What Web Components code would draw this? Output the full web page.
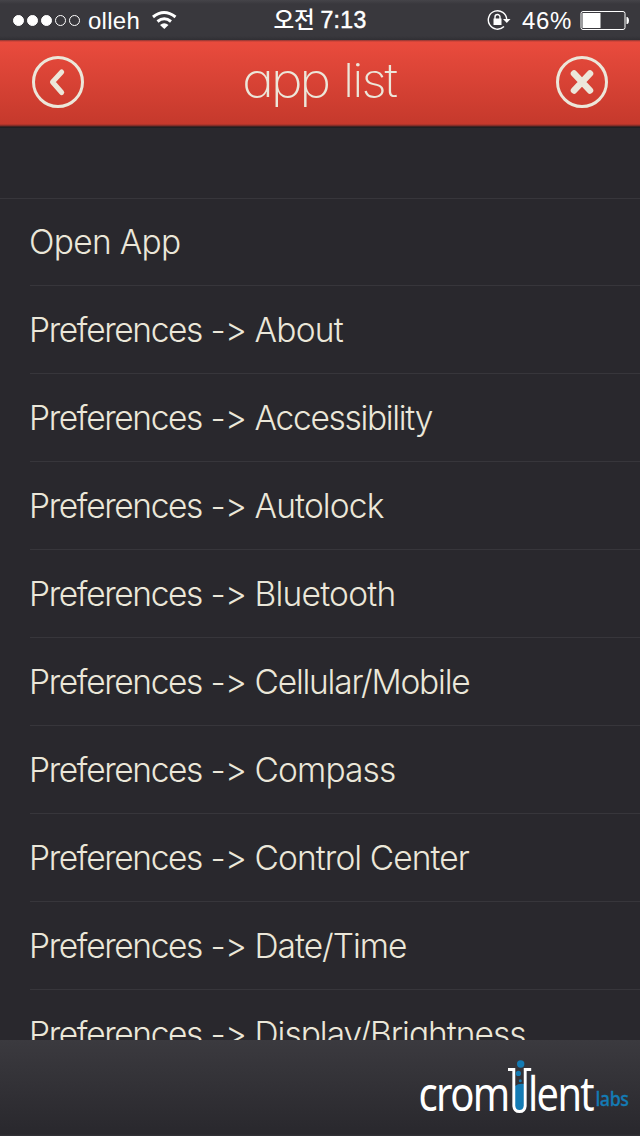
<!DOCTYPE html>
<html lang="ko"><head><meta charset="utf-8"><title>app list</title>
<style>html,body{margin:0;height:100%;background:#29282d;overflow:hidden}</style></head>
<body>
<app-screen></app-screen>
<script>
const define=(name,html,ready)=>customElements.define(name,class extends HTMLElement{
  connectedCallback(){ if(this.shadowRoot)return; const r=this.attachShadow({mode:'open'}); r.innerHTML=html; if(ready)ready(this,r); }
});
/* Text run tracked so that its advance equals the given width; "stretch" widens the glyphs. */
define('fit-text','<style>:host{display:inline-block;white-space:pre}span{display:inline-block;transform-origin:0 50%;font-feature-settings:"calt" 0,"liga" 0,"cv11" var(--single-a,0)}</style><span></span>',(h,r)=>{
  const s=r.querySelector('span'); s.textContent=h.getAttribute('text');
  const n=[...s.textContent].length, w=+h.getAttribute('width'), k=+(h.getAttribute('stretch')||1);
  s.style.letterSpacing=((w/k-s.getBoundingClientRect().width)/n)+'px';
  if(k!=1)s.style.transform='scaleX('+k+')';
  h.style.width=w+'px';
});
define('status-bar',`<style>
:host{display:grid;grid-template-columns:1fr auto 1fr;height:40px;align-items:center;box-sizing:border-box;padding:0 12px 0 12px;background:linear-gradient(#454449,#39383d 4px,#39383d 36px,#302f34);color:#fff;font:24px/40px "Liberation Sans",Arial,sans-serif}
div{display:flex;align-items:center;height:40px}.r{justify-content:flex-end}svg{display:block;flex:none}
.t{font:500 22.500px/40px "Liberation Sans","Noto Sans CJK KR",sans-serif}
.t fit-text:last-child{-webkit-text-stroke:.5px #fff;font-family:"Liberation Sans";font-size:23px;font-weight:400;line-height:42px}
.t fit-text:first-child{font-family:"Noto Sans CJK KR";line-height:37px;height:40px}
</style>
<div><svg width="70" height="40" fill="#fff" stroke="#fff"><circle cx="6.500" cy="20.500" r="5"/><circle cx="20.500" cy="20.500" r="5"/><circle cx="34.500" cy="20.500" r="5"/><g fill="none"><circle cx="48.500" cy="20.500" r="5"/><circle cx="62.500" cy="20.500" r="5"/></g></svg>
<fit-text style="margin-left:6px;line-height:43px" text="olleh" width="52"></fit-text>
<svg width="28" height="40" style="margin-left:12px" fill="none" stroke="#fff" stroke-width="3"><path d="M1 17Q12 8 23.500 17M5.500 21.500Q12.300 16 19 21.500"/><path d="M8 25Q12.300 21.500 16.500 25L12.300 29Z" fill="#fff" stroke="none"/></svg></div>
<div class="t"><fit-text text="오전" width="41"></fit-text><fit-text style="margin-left:6px" text="7:13" width="46"></fit-text></div>
<div class="r"><svg width="26" height="40" fill="none" stroke="#fff" stroke-width="1.400"><path d="M17 26.500A9.200 9.200 0 1 1 19.700 19.500"/><path d="M16 19h7.500l-3.700 4Z" fill="#fff" stroke="none"/><path d="M6.500 18.500h8V25h-8Z" fill="#fff" stroke="none"/><path d="M8 19v-2a2.500 2.500 0 0 1 5 0v2"/></svg>
<fit-text text="46%" width="50" style="margin-left:9px;line-height:43px"></fit-text>
<svg width="50" height="40" style="margin:0 -2px 0 8px"><rect x="1" y="11.500" width="44" height="18" rx="2" fill="none" stroke="#fff"/><path d="M2.500 13h18v15h-18ZM46.500 17h1q1.500 1 1.500 3.500T47.500 24h-1Z" fill="#fff"/></svg></div>`);
define('round-button',`<style>:host{display:block;width:52px;height:52px}svg{display:block}</style><svg width="52" height="52" fill="none" stroke="#ece7da" stroke-linecap="round" stroke-linejoin="round"><circle cx="26" cy="26" r="24.500" stroke-width="3"/><path/></svg>`,(h,r)=>{
 const p=r.querySelector('path'),x=h.getAttribute('icon')=='close';p.setAttribute('d',x?'M18 17.500L34 34.500M34 17.500L18 34.500':'M29.700 16L20.500 26L29.700 36.500');p.setAttribute('stroke-width',x?6.5:5)});
define('title-bar',`<style>:host{display:flex;height:88px;box-sizing:border-box;padding:0 32px 4px;align-items:center;justify-content:space-between;background:linear-gradient(#8b3532 0,#e94b3d 2px,#c5392c 84px,#6e2926 86px,#1b1b1d 87px,#242327 88px);color:#ece7da;font:200 47px/80px Inter,sans-serif;--single-a:1}
div{display:flex;gap:15px;margin:-4px 0 0 -2px}</style><round-button icon="back"></round-button><div><fit-text text="app" width="86" stretch="1.15"></fit-text><fit-text text="list" width="53" stretch="1.06"></fit-text></div><round-button icon="close"></round-button>`);
define('list-row',`<style>:host{display:block;height:88px;margin-left:30px;box-sizing:border-box;border-top:1px solid #37363b;color:#ebe7d9;font:300 33.500px/87px Inter,sans-serif;white-space:nowrap}
:host([first]){margin-left:0;padding-left:30px;height:87px}div{display:flex;margin-left:-1px}:host(:not([first])) div{padding-top:1px}</style><div></div>`,(h,r)=>{
 const f=h.hasAttribute('first'),pre=f?'':'<fit-text text="Preferences" width="173"></fit-text><fit-text text=" -> " width="52.5"></fit-text>';
 r.querySelector('div').innerHTML=pre+`<fit-text text="${h.getAttribute('label')}" width="${h.getAttribute('width')}"></fit-text>`});
define('app-list',`<style>:host{display:block;padding-top:70px;overflow:hidden;flex:1;min-height:0;box-sizing:border-box}</style>`,(h,r)=>{
 [['Open App',151.5],['About',88.5],['Accessibility',177.5],['Autolock',129],['Bluetooth',141],['Cellular/Mobile',215],['Compass',141],['Control Center',214.5],['Date/Time',152],['Display/Brightness',271]].forEach(([t,w],i)=>{
 const e=document.createElement('list-row');e.setAttribute('label',t);e.setAttribute('width',w);if(!i)e.setAttribute('first','');r.append(e)})});
define('brand-footer',`<style>:host{display:flex;justify-content:flex-end;height:96px;background:linear-gradient(#3b3a3f,#29282d 94px,#343338 96px)}svg{display:block}</style>
<svg width="224" height="96" font-family="Noto Sans, sans-serif"><g fill="#fff" font-size="48"><text x="2.500" y="71" letter-spacing="-2" textLength="90" lengthAdjust="spacingAndGlyphs">crom</text><text x="112" y="71" letter-spacing="-2" textLength="65" lengthAdjust="spacingAndGlyphs">lent</text></g>
<path d="M99 46q4-3 9-2v23q-1 4-4.500 4t-4.500-4Z" fill="#147bb4"/><path d="M92 29.500h5.800V66q.5 5.500 5.700 5.500t5.700-5.500V29.500h6" fill="none" stroke="#fff" stroke-width="2.900"/><g fill="#147bb4"><circle cx="104.700" cy="24" r="3.700"/><circle cx="102.400" cy="33.400" r="2.600"/><circle cx="104.300" cy="40.700" r="1.500"/><text x="179.500" y="66" font-size="20" font-weight="500" stroke="#147bb4" stroke-width=".3" letter-spacing="-.5" textLength="33" lengthAdjust="spacingAndGlyphs">labs</text></g></svg>`);
define('app-screen',`<style>:host{display:flex;flex-direction:column;width:640px;height:1136px;background:#29282d;overflow:hidden}status-bar,title-bar,brand-footer{flex:none}</style><status-bar></status-bar><title-bar></title-bar><app-list></app-list><brand-footer></brand-footer>`);
</script></body></html>
